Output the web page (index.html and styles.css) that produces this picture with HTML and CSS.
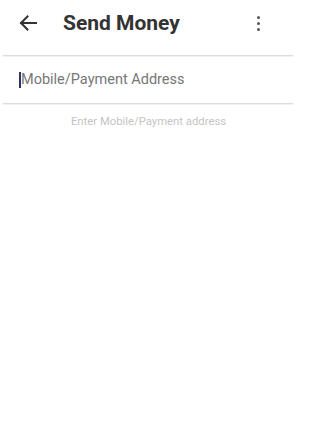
FILE: index.html
```html
<!DOCTYPE html>
<html>
<head>
<meta charset="utf-8">
<link rel="stylesheet" href="styles.css">
</head>
<body>
<div class="page">
  <header class="toolbar">
    <span class="back">
      <svg width="18" height="16" viewBox="0 0 18 16"><path d="M17 8H2M8.5 1.5L2 8l6.5 6.5" fill="none" stroke="#333" stroke-width="2" stroke-linecap="square"/></svg>
    </span>
    <h1 class="title">Send Money</h1>
    <span class="menu"><i></i><i></i><i></i></span>
  </header>
  <div class="divider"></div>
  <div class="field">
    <span class="caret"></span><span class="placeholder">Mobile/Payment Address</span>
  </div>
  <div class="divider"></div>
  <p class="hint">Enter Mobile/Payment address</p>
</div>
</body>
</html>
```
FILE: styles.css
```css
html, body { margin: 0; padding: 0; background: #fff; }
.page { font-family: Roboto, "Noto Sans", sans-serif; width: 297px; }
.toolbar { display: flex; align-items: center; height: 46px; margin-bottom: 9px; }
.back { display: flex; width: 18px; height: 16px; margin-left: 19px; }
.title { margin: 0 0 0 26px; font-size: 21px; font-weight: 700; color: #333; flex: 1; letter-spacing: 0; }
.menu { display: flex; flex-direction: column; gap: 3px; margin-right: 37px; }
.menu i { display: block; width: 3px; height: 3px; border-radius: 50%; background: #555; }
.divider { height: 1px; background: #ddd; margin: 0 4px 0 3px; box-shadow: 0 1px 0 #f0f0f0; }
.field { display: flex; align-items: center; height: 47px; padding-left: 19px; }
.caret { display: block; width: 2px; height: 16px; background: #30306a; }
.placeholder { font-size: 14.5px; color: #777; }
.hint { margin: 11px 0 0; text-align: center; font-size: 11.3px; color: #c4c4c4; }
```
